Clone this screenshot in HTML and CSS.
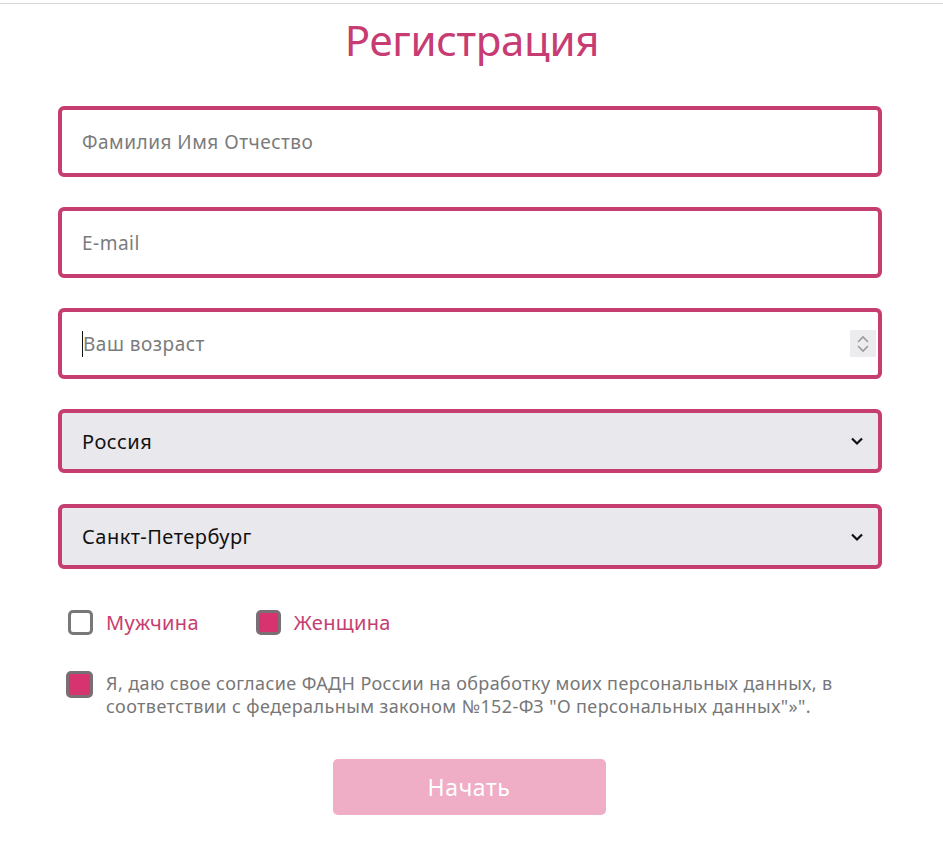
FILE: index.html
```html
<!DOCTYPE html>
<html lang="ru">
<head>
<meta charset="utf-8">
<link rel="stylesheet" href="styles.css">
</head>
<body>
<div class="topline"></div>
<main class="page">
  <h1 class="title">Регистрация</h1>
  <form class="form">
    <div class="field"><span class="ph">Фамилия Имя Отчество</span></div>
    <div class="field"><span class="ph">E-mail</span></div>
    <div class="field field-num"><span class="caret"></span><span class="ph">Ваш возраст</span>
      <span class="spin"><svg width="14" height="20" viewBox="0 0 14 20"><path d="M2 8 L7 3 L12 8" fill="none" stroke="#9a9a9a" stroke-width="1.6"/><path d="M2 12 L7 17 L12 12" fill="none" stroke="#9a9a9a" stroke-width="1.6"/></svg></span>
    </div>
    <div class="field field-select"><span class="val">Россия</span>
      <svg class="chev" width="14" height="10" viewBox="0 0 14 10"><path d="M2 2.5 L7 7.5 L12 2.5" fill="none" stroke="#111" stroke-width="2.2"/></svg></div>
    <div class="field field-select"><span class="val">Санкт-Петербург</span>
      <svg class="chev" width="14" height="10" viewBox="0 0 14 10"><path d="M2 2.5 L7 7.5 L12 2.5" fill="none" stroke="#111" stroke-width="2.2"/></svg></div>
    <div class="gender">
      <label class="opt"><span class="box"></span><span class="opt-label">Мужчина</span></label>
      <label class="opt"><span class="box checked"></span><span class="opt-label">Женщина</span></label>
    </div>
    <div class="consent">
      <span class="box checked"></span>
      <p class="consent-text">Я, даю свое согласие ФАДН России на обработку моих персональных данных, в соответствии с федеральным законом №152-ФЗ "О персональных данных"»".</p>
    </div>
    <div class="actions"><button type="button" class="btn">Начать</button></div>
  </form>
</main>
</body>
</html>
```
FILE: styles.css
```css
* { box-sizing: border-box; }
html, body { margin: 0; padding: 0; background: #fff; }
body { font-family: "Noto Sans", "Open Sans", sans-serif; }
.topline { height: 4px; border-bottom: 1px solid #d6d6d6; }
.page { width: 824px; margin: 0 0 0 58px; }
.title {
  margin: 11px 0 0; text-align: center; font-weight: 400; font-size: 42px;
  color: #c73c72; line-height: 50px; letter-spacing: -0.3px; padding-left: 4px;
}
.form { display: flex; flex-direction: column; margin-top: 41px; }
.field {
  position: relative; height: 71px; border: 4px solid #c63e70; border-radius: 6px;
  display: flex; align-items: center; padding-left: 20px; margin-bottom: 30px; background: #fff;
}
.ph { color: #7b7b7b; font-size: 19px; letter-spacing: 0.5px; }
.caret { width: 1px; height: 26px; background: #111; }
.spin {
  position: absolute; right: 2px; top: 18px; width: 26px; height: 27px; background: #ececee;
  display: flex; align-items: center; justify-content: center;
}
.field-select { height: 64px; background: #e9e8ed; justify-content: space-between; padding-right: 14px; margin-bottom: 31px; }
.field-select + .field-select { height: 65px; }
.val { color: #111; font-size: 20px; letter-spacing: 0.5px; }
.gender { display: flex; gap: 57px; padding-left: 10px; margin-top: 9px; }
.opt { display: flex; align-items: center; gap: 13px; }
.box { width: 25px; height: 25px; border: 3px solid #787878; border-radius: 5px; background: #fff; flex: none; }
.box.checked { background: #d6336f; border-color: #7a6f74; }
.opt-label { color: #c63e70; font-size: 20px; letter-spacing: 0.3px; }
.consent { display: flex; gap: 13px; padding-left: 8px; margin-top: 35px; align-items: flex-start; }
.consent .box { width: 27px; height: 27px; }
.consent-text { margin: 1px 0 0; color: #777; font-size: 18px; line-height: 23px; letter-spacing: 0.4px; max-width: 750px; }
.actions { display: flex; justify-content: center; margin-top: 41px; }
.btn {
  width: 273px; height: 56px; border: none; border-radius: 5px; background: #efadc6;
  color: #fff; font-family: inherit; font-size: 23px; letter-spacing: 0.6px; margin-right: 2px;
}
```
